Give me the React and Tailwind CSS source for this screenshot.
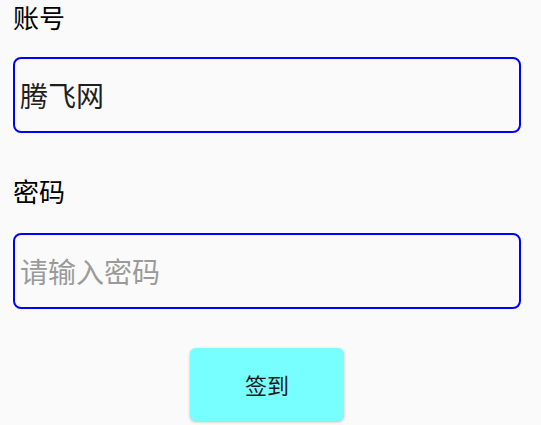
const App = () => {
  return (
    <div
      className="w-[541px] h-[425px] bg-[#fafafa] overflow-hidden flex flex-col px-[13px]"
      style={{ fontFamily: '"Noto Sans CJK SC", "Noto Sans", sans-serif' }}
    >
      <label className="pt-[2px] text-[26px] leading-[30px] text-black">账号</label>
      <div className="mt-[25px] h-[76px] w-[508px] border-2 border-[#0000ff] rounded-[8px] flex items-center px-[5px]">
        <span className="text-[28px] leading-none text-[#1f1f1f]">腾飞网</span>
      </div>

      <label className="mt-[43px] text-[26px] leading-[30px] text-black">密码</label>
      <div className="mt-[27px] h-[76px] w-[508px] border-2 border-[#0000ff] rounded-[8px] flex items-center px-[5px]">
        <span className="text-[28px] leading-none text-[#9a9a9a]">请输入密码</span>
      </div>

      <div className="mt-[39px] w-[508px] flex justify-center">
        <button className="w-[154px] h-[73px] bg-[#77ffff] rounded-[6px] shadow-[0_1px_3px_rgba(0,0,0,0.25)] flex items-center justify-center text-[22px] text-[#1a1a1a]">
          签到
        </button>
      </div>
    </div>
  );
};

export default App;
